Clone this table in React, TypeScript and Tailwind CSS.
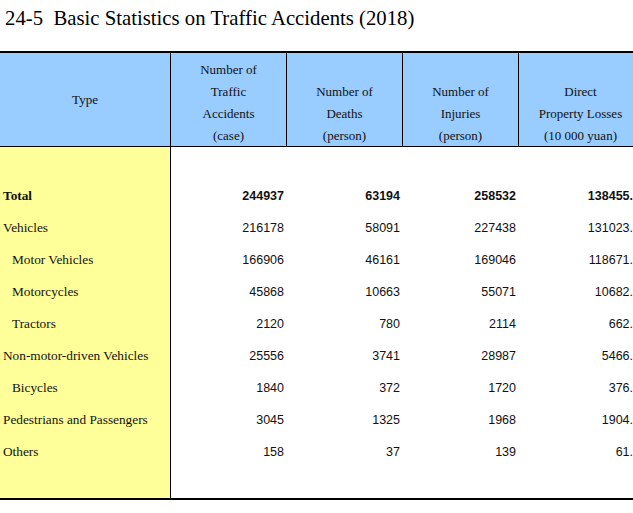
import React from "react";

type Row = { label: string; indent?: boolean; bold?: boolean; v: string[] };

const rows: Row[] = [
  { label: "Total", bold: true, v: ["244937", "63194", "258532", "138455.9"] },
  { label: "Vehicles", v: ["216178", "58091", "227438", "131023.4"] },
  { label: "Motor Vehicles", indent: true, v: ["166906", "46161", "169046", "118671.2"] },
  { label: "Motorcycles", indent: true, v: ["45868", "10663", "55071", "10682.3"] },
  { label: "Tractors", indent: true, v: ["2120", "780", "2114", "662.1"] },
  { label: "Non-motor-driven Vehicles", v: ["25556", "3741", "28987", "5466.6"] },
  { label: "Bicycles", indent: true, v: ["1840", "372", "1720", "376.5"] },
  { label: "Pedestrians and Passengers", v: ["3045", "1325", "1968", "1904.2"] },
  { label: "Others", v: ["158", "37", "139", "61.8"] },
];

const serif = { fontFamily: '"Liberation Serif", "Times New Roman", serif' };
const sans = { fontFamily: '"Liberation Sans", Arial, sans-serif' };

const widths = ["w-[116px]", "w-[116px]", "w-[116px]", "w-[124px]"];

export default function App() {
  return (
    <div className="w-[633px] h-[513px] overflow-hidden bg-white">
      <div className="w-[700px]">
        <div className="h-[51px] pl-[5px] pt-[5px] text-[20.75px] leading-[26px] text-black whitespace-pre" style={serif}>
          {"24-5  Basic Statistics on Traffic Accidents (2018)"}
        </div>
        <div className="border-t-2 border-black">
          <div className="flex h-[94px] bg-[#99ccff] border-b border-black text-[13px] leading-[22px] text-[#111]" style={serif}>
            <div className="w-[171px] shrink-0 border-r border-black flex items-center justify-center">Type</div>
            <div className="w-[116px] shrink-0 border-r border-black flex flex-col items-center justify-center pt-[6px] text-center">
              <span>Number of</span>
              <span>Traffic</span>
              <span>Accidents</span>
              <span>(case)</span>
            </div>
            <div className="w-[116px] shrink-0 border-r border-black flex flex-col items-center justify-center pt-[28px] text-center">
              <span>Number of</span>
              <span>Deaths</span>
              <span>(person)</span>
            </div>
            <div className="w-[116px] shrink-0 border-r border-black flex flex-col items-center justify-center pt-[28px] text-center">
              <span>Number of</span>
              <span>Injuries</span>
              <span>(person)</span>
            </div>
            <div className="w-[124px] shrink-0 border-r border-black flex flex-col items-center justify-center pt-[28px] text-center">
              <span>Direct</span>
              <span>Property Losses</span>
              <span>(10 000 yuan)</span>
            </div>
          </div>
          <div className="flex flex-col">
            <div className="flex h-[32px]">
              <div className="w-[171px] shrink-0 bg-[#ffff99] border-r border-black" />
            </div>
            {rows.map((r) => (
              <div key={r.label} className="flex h-[32px]">
                <div
                  className={`w-[171px] shrink-0 bg-[#ffff99] border-r border-black flex items-center pt-[2px] text-[13.3px] text-[#111] whitespace-nowrap ${r.indent ? "pl-[12px]" : "pl-[3px]"} ${r.bold ? "font-bold" : ""}`}
                  style={serif}
                >
                  {r.label}
                </div>
                {r.v.map((val, i) => (
                  <div
                    key={i}
                    className={`${widths[i]} shrink-0 flex items-center justify-end pr-[3px] pt-[2px] text-[12.5px] text-[#111] ${r.bold ? "font-bold" : ""}`}
                    style={sans}
                  >
                    {val}
                  </div>
                ))}
              </div>
            ))}
            <div className="flex h-[31px]">
              <div className="w-[171px] shrink-0 bg-[#ffff99] border-r border-black" />
            </div>
          </div>
          <div className="h-[2px] bg-black" />
        </div>
      </div>
    </div>
  );
}
